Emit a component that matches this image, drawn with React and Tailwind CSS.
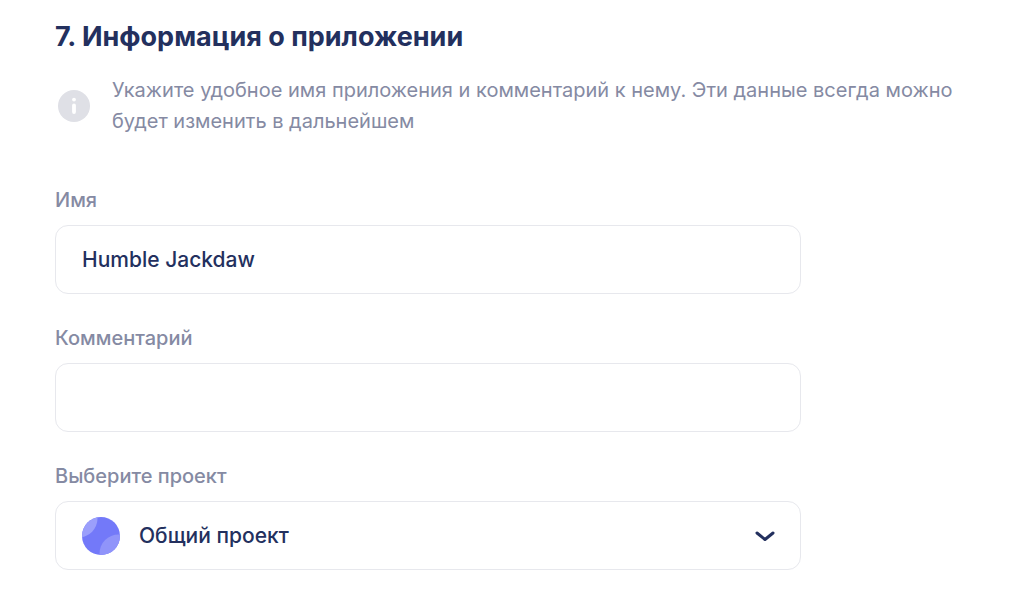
import { useState } from "react";

function InfoIcon() {
  return (
    <svg viewBox="0 0 32 32" className="size-8 shrink-0" aria-hidden="true">
      <circle cx="16" cy="16" r="16" fill="#dfe0e6" />
      <circle cx="16" cy="9.6" r="1.9" fill="#fff" />
      <rect x="14.1" y="13.6" width="3.8" height="10.4" rx="1.9" fill="#fff" />
    </svg>
  );
}

function ProjectIcon() {
  return (
    <svg viewBox="0 0 38 38" className="size-[38px]" aria-hidden="true">
      <defs>
        <clipPath id="ball">
          <circle cx="19" cy="19" r="19" />
        </clipPath>
      </defs>
      <g clipPath="url(#ball)">
        <rect width="38" height="38" fill="#7379f9" />
        <circle cx="-3.5" cy="1.5" r="19" fill="#9b9ffb" />
        <circle cx="36.5" cy="36.5" r="19" fill="#9094fa" />
      </g>
    </svg>
  );
}

function Field({ id, label, children }) {
  return (
    <div className="flex flex-col gap-[9px]">
      <label htmlFor={id} className="self-start text-[20px] leading-8 font-medium text-[#858aa3]">
        {label}
      </label>
      {children}
    </div>
  );
}

const box =
  "h-[69px] w-full appearance-none rounded-[13px] border border-[#e7e8ed] bg-white text-[21px] font-medium text-[#23305e] outline-none";

export default function App() {
  const [name, setName] = useState("Humble Jackdaw");
  const [comment, setComment] = useState("");

  return (
    <main className="bg-white px-[55px] pt-[17px] pb-10 font-['Inter','Noto_Sans',sans-serif]">
      <h1 className="text-[27px] leading-10 font-bold text-[#23305e]">7. Информация о приложении</h1>
      <div className="mt-[18px] flex items-center gap-[22px] pl-[3px]">
        <InfoIcon />
        <p className="text-[20px] leading-[31px] text-[#858aa3]">
          Укажите удобное имя приложения и комментарий к нему. Эти данные всегда можно будет изменить в
          дальнейшем
        </p>
      </div>
      <form className="mt-[47px] flex max-w-[746px] flex-col gap-7">
        <Field id="name" label="Имя">
          <input id="name" type="text" value={name} onChange={(e) => setName(e.target.value)} className={`${box} px-[26px]`} />
        </Field>
        <Field id="comment" label="Комментарий">
          <input id="comment" type="text" value={comment} onChange={(e) => setComment(e.target.value)} className={`${box} px-[26px]`} />
        </Field>
        <Field id="project" label="Выберите проект">
          <div className="relative">
            <select id="project" className={`${box} pr-14 pl-[83px]`}>
              <option>Общий проект</option>
            </select>
            <div className="pointer-events-none absolute inset-0 flex items-center justify-between pr-[26px] pl-[27px]">
              <ProjectIcon />
              <svg viewBox="0 0 20 12" className="h-3 w-5" fill="none" stroke="#23305e" strokeWidth="3" strokeLinecap="round" strokeLinejoin="round" aria-hidden="true">
                <path d="M2 3 10 9.5 18 3" />
              </svg>
            </div>
          </div>
        </Field>
      </form>
    </main>
  );
}
